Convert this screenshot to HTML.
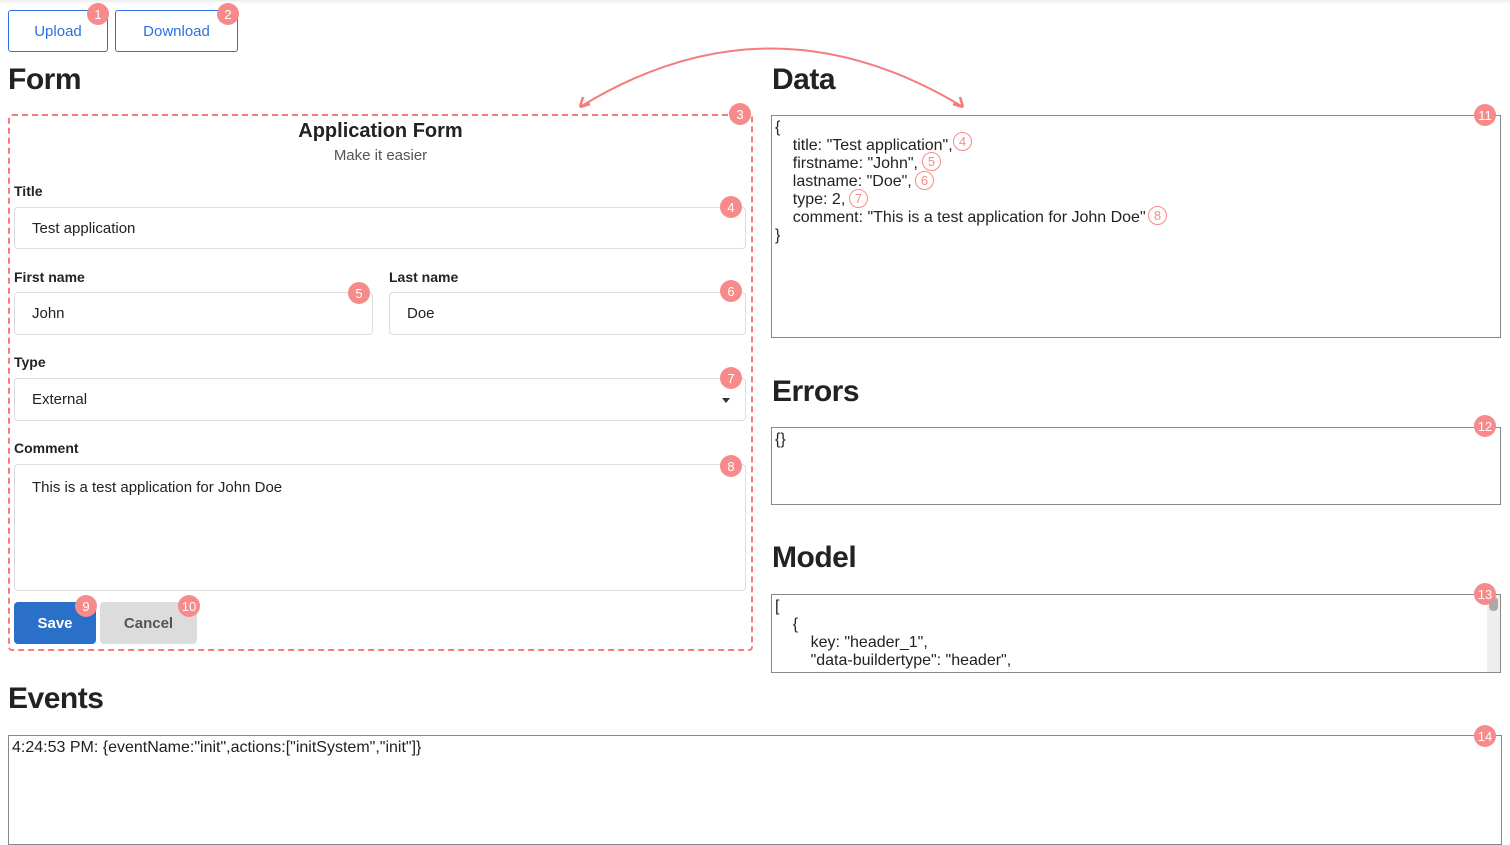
<!DOCTYPE html>
<html><head><style>
*{box-sizing:border-box;margin:0;padding:0}
body{width:1510px;height:833px;overflow:hidden;background:#fff;font-family:"Liberation Sans",sans-serif;color:#222;position:relative}
.a{position:absolute}
.btn{position:absolute;border:1px solid #2d6fe0;border-radius:3px;color:#2d6fe0;font-size:15px;display:flex;align-items:center;justify-content:center;background:#fff}
.b{position:absolute;width:22px;height:22px;border-radius:50%;background:#f78a8a;color:#fff;font-size:13px;display:flex;align-items:center;justify-content:center}
.bo{position:absolute;width:19px;height:19px;border-radius:50%;border:1.5px solid #f78a8a;color:#f78a8a;font-size:13px;display:flex;align-items:center;justify-content:center;background:#fff}
h1{position:absolute;font-size:30px;font-weight:bold;color:#222;letter-spacing:-0.5px}
.lab{position:absolute;font-size:14px;font-weight:bold;color:#222}
.in{position:absolute;border:1px solid #ddd;border-radius:4px;font-size:15px;padding-left:17px;display:flex;align-items:center;background:#fff}
.box{position:absolute;border:1px solid #888;font-size:16px;line-height:18px;padding:3px 3px;white-space:pre;background:#fff}
</style></head><body>
<div class="a" style="left:0;top:0;width:1510px;height:4px;background:linear-gradient(#eee,#fff)"></div>
<div class="btn" style="left:8px;top:10px;width:100px;height:42px">Upload</div>
<div class="btn" style="left:115px;top:10px;width:123px;height:42px">Download</div>
<div class="b" style="left:87px;top:3px">1</div>
<div class="b" style="left:217px;top:3px">2</div>
<h1 style="left:8px;top:63px">Form</h1>
<h1 style="left:772px;top:63px">Data</h1>
<h1 style="left:772px;top:375px">Errors</h1>
<h1 style="left:772px;top:541px">Model</h1>
<h1 style="left:8px;top:682px">Events</h1>
<svg class="a" style="left:0;top:0" width="1510" height="833"><path d="M580 107 Q770 -10 963 107" fill="none" stroke="#f77b7b" stroke-width="2"/><path d="M580 107 l3 -10 M580 107 l10 -3" stroke="#f77b7b" stroke-width="2.5"/><path d="M963 107 l-10 -3 M963 107 l-3 -10" stroke="#f77b7b" stroke-width="2.5"/></svg>
<div class="a" style="left:8px;top:114px;width:745px;height:537px;border:2px dashed #f77b7b;border-radius:4px"></div>
<div class="b" style="left:729px;top:103px">3</div>
<div class="a" style="left:8px;top:120px;width:745px;text-align:center;font-size:20px;font-weight:bold">Application Form</div>
<div class="a" style="left:8px;top:147px;width:745px;text-align:center;font-size:15px;color:#555">Make it easier</div>
<div class="lab" style="left:14px;top:183px">Title</div>
<div class="in" style="left:14px;top:207px;width:732px;height:42px">Test application</div>
<div class="b" style="left:720px;top:196px">4</div>
<div class="lab" style="left:14px;top:269px">First name</div>
<div class="lab" style="left:389px;top:269px">Last name</div>
<div class="in" style="left:14px;top:292px;width:359px;height:43px">John</div>
<div class="in" style="left:389px;top:292px;width:357px;height:43px">Doe</div>
<div class="b" style="left:348px;top:282px">5</div>
<div class="b" style="left:720px;top:280px">6</div>
<div class="lab" style="left:14px;top:354px">Type</div>
<div class="in" style="left:14px;top:378px;width:732px;height:43px">External</div>
<div class="a" style="left:722px;top:398px;border:4px solid transparent;border-top:5px solid #333"></div>
<div class="b" style="left:720px;top:367px">7</div>
<div class="lab" style="left:14px;top:440px">Comment</div>
<div class="in" style="left:14px;top:464px;width:732px;height:127px;align-items:flex-start;padding-top:14px">This is a test application for John Doe</div>
<div class="b" style="left:720px;top:455px">8</div>
<div class="a" style="left:14px;top:602px;width:82px;height:42px;background:#2a70c9;border-radius:4px;color:#fff;font-weight:bold;font-size:15px;display:flex;align-items:center;justify-content:center">Save</div>
<div class="a" style="left:100px;top:602px;width:97px;height:42px;background:#dcdcdc;border-radius:4px;color:#555;font-weight:bold;font-size:15px;display:flex;align-items:center;justify-content:center">Cancel</div>
<div class="b" style="left:75px;top:595px">9</div>
<div class="b" style="left:178px;top:595px">10</div>
<div class="box" style="left:771px;top:115px;width:730px;height:223px">{
    title: "Test application",
    firstname: "John",
    lastname: "Doe",
    type: 2,
    comment: "This is a test application for John Doe"
}</div>
<div class="bo" style="left:953px;top:132px">4</div>
<div class="bo" style="left:922px;top:152px">5</div>
<div class="bo" style="left:915px;top:171px">6</div>
<div class="bo" style="left:849px;top:189px">7</div>
<div class="bo" style="left:1148px;top:206px">8</div>
<div class="b" style="left:1474px;top:104px">11</div>
<div class="box" style="left:771px;top:427px;width:730px;height:78px">{}</div>
<div class="b" style="left:1474px;top:415px">12</div>
<div class="box" style="left:771px;top:594px;width:730px;height:79px;overflow:hidden">[
    {
        key: "header_1",
        "data-buildertype": "header",</div>
<div class="a" style="left:1487px;top:595px;width:13px;height:77px;background:#eee"></div>
<div class="a" style="left:1489px;top:597px;width:9px;height:14px;background:#aaa;border-radius:4px"></div>
<div class="b" style="left:1474px;top:583px">13</div>
<div class="box" style="left:8px;top:735px;width:1494px;height:110px">4:24:53 PM: {eventName:"init",actions:["initSystem","init"]}</div>
<div class="b" style="left:1474px;top:725px">14</div>
</body></html>
